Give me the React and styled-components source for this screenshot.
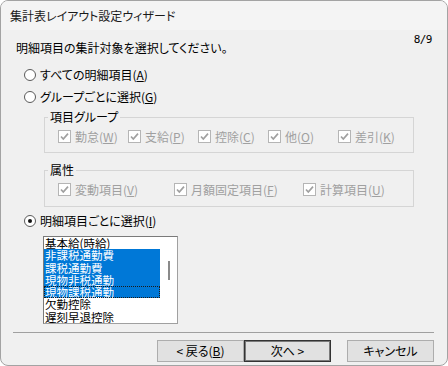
import React from "react";
import styled, { createGlobalStyle } from "styled-components";

const GlobalStyle = createGlobalStyle`
  html, body {
    margin: 0;
    padding: 0;
    background: #ffffff;
  }
  body {
    font-family: "Noto Sans CJK JP", "Noto Sans", sans-serif;
  }
`;

const Window = styled.div`
  width: 448px;
  height: 366px;
  box-sizing: border-box;
  border: 1px solid #a3a3a3;
  border-radius: 8px;
  overflow: hidden;
  background: #f0f0f0;
  display: flex;
  flex-direction: column;
  font-size: 12px;
  color: #000;
  font-feature-settings: "palt";
`;

const TitleBar = styled.div`
  height: 29px;
  flex-shrink: 0;
  background: #f4f4f4;
  padding-left: 9px;
  display: flex;
  align-items: center;
  font-size: 12px;
  color: #1a1a1a;
`;

const Body = styled.div`
  flex: 1;
  display: flex;
  flex-direction: column;
`;

const HeaderRow = styled.div`
  display: flex;
  justify-content: space-between;
  align-items: flex-start;
  padding: 4px 15px 0 15px;
`;

const Instruction = styled.div`
  margin-top: 7px;
  line-height: 14px;
`;

const Counter = styled.div`
  line-height: 12px;
  font-family: "DejaVu Sans Mono", monospace;
  font-size: 11px;
  letter-spacing: -0.5px;
`;

const RadioRow = styled.label`
  display: flex;
  align-items: center;
  gap: 4px;
  height: 16px;
  margin-top: ${(p) => p.$top}px;
  padding-left: 23px;
  line-height: 16px;
`;

const RadioCircle = styled.span`
  width: 12px;
  height: 12px;
  box-sizing: border-box;
  border-radius: 50%;
  border: 1px solid #5a5a5a;
  background: #fff;
  display: flex;
  align-items: center;
  justify-content: center;
  &::after {
    content: "";
    width: 4px;
    height: 4px;
    border-radius: 50%;
    background: ${(p) => (p.$checked ? "#111" : "transparent")};
  }
`;

const Group = styled.fieldset`
  margin: ${(p) => p.$top}px 0 0 43px;
  width: 370px;
  box-sizing: border-box;
  border: 1px solid #d5d5d5;
  padding: 0 0 ${(p) => p.$bottom}px 0;
  min-width: 0;
`;

const Legend = styled.legend`
  margin-left: 3px;
  padding: 0 2px;
  line-height: 14px;
  font-size: 12px;
`;

const CheckRow = styled.div`
  display: flex;
  align-items: center;
  height: 16px;
  padding: 4px 0 0 13px;
`;

const CheckCell = styled.div`
  width: ${(p) => p.$w}px;
  flex-shrink: 0;
  display: flex;
  align-items: center;
  gap: 4px;
  color: #a0a0a0;
  white-space: nowrap;
`;

const ListBox = styled.div`
  margin: 7px 0 0 42px;
  width: 135px;
  height: 88px;
  box-sizing: border-box;
  border: 1px solid #a0a0a0;
  border-top-color: #7a7a7a;
  border-left-color: #7a7a7a;
  background: #fff;
  display: flex;
`;

const ListItems = styled.div`
  flex: 1;
  display: flex;
  flex-direction: column;
  overflow: hidden;
`;

const Item = styled.div`
  height: 12.3px;
  flex-shrink: 0;
  line-height: 12.3px;
  padding-left: 1px;
  font-size: 11.5px;
  font-feature-settings: normal;
  white-space: nowrap;
  box-sizing: border-box;
  background: ${(p) => (p.$selected ? "#0078d7" : "transparent")};
  color: ${(p) => (p.$selected ? "#fff" : "#000")};
  outline: ${(p) => (p.$focus ? "1px dotted #1a1a1a" : "none")};
  outline-offset: -1px;
`;

const ScrollTrack = styled.div`
  width: 17px;
  flex-shrink: 0;
  display: flex;
  justify-content: center;
  padding-top: 24px;
  box-sizing: border-box;
`;

const Thumb = styled.div`
  width: 2px;
  height: 19px;
  background: #8a8a8a;
`;

const Separator = styled.div`
  margin: 8px 13px 0 12px;
  border-top: 1px solid #a0a0a0;
`;

const ButtonRow = styled.div`
  display: flex;
  justify-content: flex-end;
  margin-top: 7px;
  padding-right: 13px;
`;

const Button = styled.button`
  width: 87px;
  height: 22px;
  box-sizing: border-box;
  margin: 0 ${(p) => p.$gap || 0}px 0 0;
  border: 1px solid ${(p) => (p.$default ? "#333" : "#adadad")};
  box-shadow: ${(p) => (p.$default ? "inset 0 0 0 1px #7a7a7a" : "none")};
  background: #e1e1e1;
  font-family: inherit;
  font-size: 12px;
  font-feature-settings: "palt";
  color: #000;
  padding: 0;
  line-height: 18px;
`;

function CheckIcon() {
  return (
    <svg width="13" height="13" viewBox="0 0 13 13">
      <rect x="0.5" y="0.5" width="12" height="12" fill="#fff" stroke="#b5b5b5" />
      <path d="M3 6.5 L5.3 9 L10 3.6" fill="none" stroke="#a0a0a0" strokeWidth="1.7" />
    </svg>
  );
}

function Check({ w, label, keyChar }) {
  return (
    <CheckCell $w={w}>
      <CheckIcon />
      <span>
        {label}(<u>{keyChar}</u>)
      </span>
    </CheckCell>
  );
}

const items = [
  { name: "基本給(時給)" },
  { name: "非課税通勤費", selected: true },
  { name: "課税通勤費", selected: true },
  { name: "現物非税通勤", selected: true },
  { name: "現物課税通勤", selected: true, focus: true },
  { name: "欠勤控除" },
  { name: "遅刻早退控除" },
];

export default function App() {
  return (
    <>
      <GlobalStyle />
      <Window>
        <TitleBar>集計表レイアウト設定ウィザード</TitleBar>
        <Body>
          <HeaderRow>
            <Instruction>明細項目の集計対象を選択してください。</Instruction>
            <Counter>8/9</Counter>
          </HeaderRow>

          <RadioRow $top={12}>
            <RadioCircle />
            <span>
              すべての明細項目(<u>A</u>)
            </span>
          </RadioRow>
          <RadioRow $top={6}>
            <RadioCircle />
            <span>
              グループごとに選択(<u>G</u>)
            </span>
          </RadioRow>

          <Group $top={5} $bottom={8}>
            <Legend>項目グループ</Legend>
            <CheckRow>
              <Check w={70} label="勤怠" keyChar="W" />
              <Check w={70} label="支給" keyChar="P" />
              <Check w={70} label="控除" keyChar="C" />
              <Check w={70} label="他" keyChar="O" />
              <Check w={70} label="差引" keyChar="K" />
            </CheckRow>
          </Group>

          <Group $top={10} $bottom={9}>
            <Legend>属性</Legend>
            <CheckRow>
              <Check w={116} label="変動項目" keyChar="V" />
              <Check w={129} label="月額固定項目" keyChar="F" />
              <Check w={100} label="計算項目" keyChar="U" />
            </CheckRow>
          </Group>

          <RadioRow $top={6}>
            <RadioCircle $checked />
            <span>
              明細項目ごとに選択(<u>I</u>)
            </span>
          </RadioRow>

          <ListBox>
            <ListItems>
              {items.map((it) => (
                <Item key={it.name} $selected={it.selected} $focus={it.focus}>
                  {it.name}
                </Item>
              ))}
            </ListItems>
            <ScrollTrack>
              <Thumb />
            </ScrollTrack>
          </ListBox>

          <Separator />

          <ButtonRow>
            <Button>
              &lt; 戻る(<u>B</u>)
            </Button>
            <Button $default $gap={16}>
              次へ &gt;
            </Button>
            <Button>キャンセル</Button>
          </ButtonRow>
        </Body>
      </Window>
    </>
  );
}
